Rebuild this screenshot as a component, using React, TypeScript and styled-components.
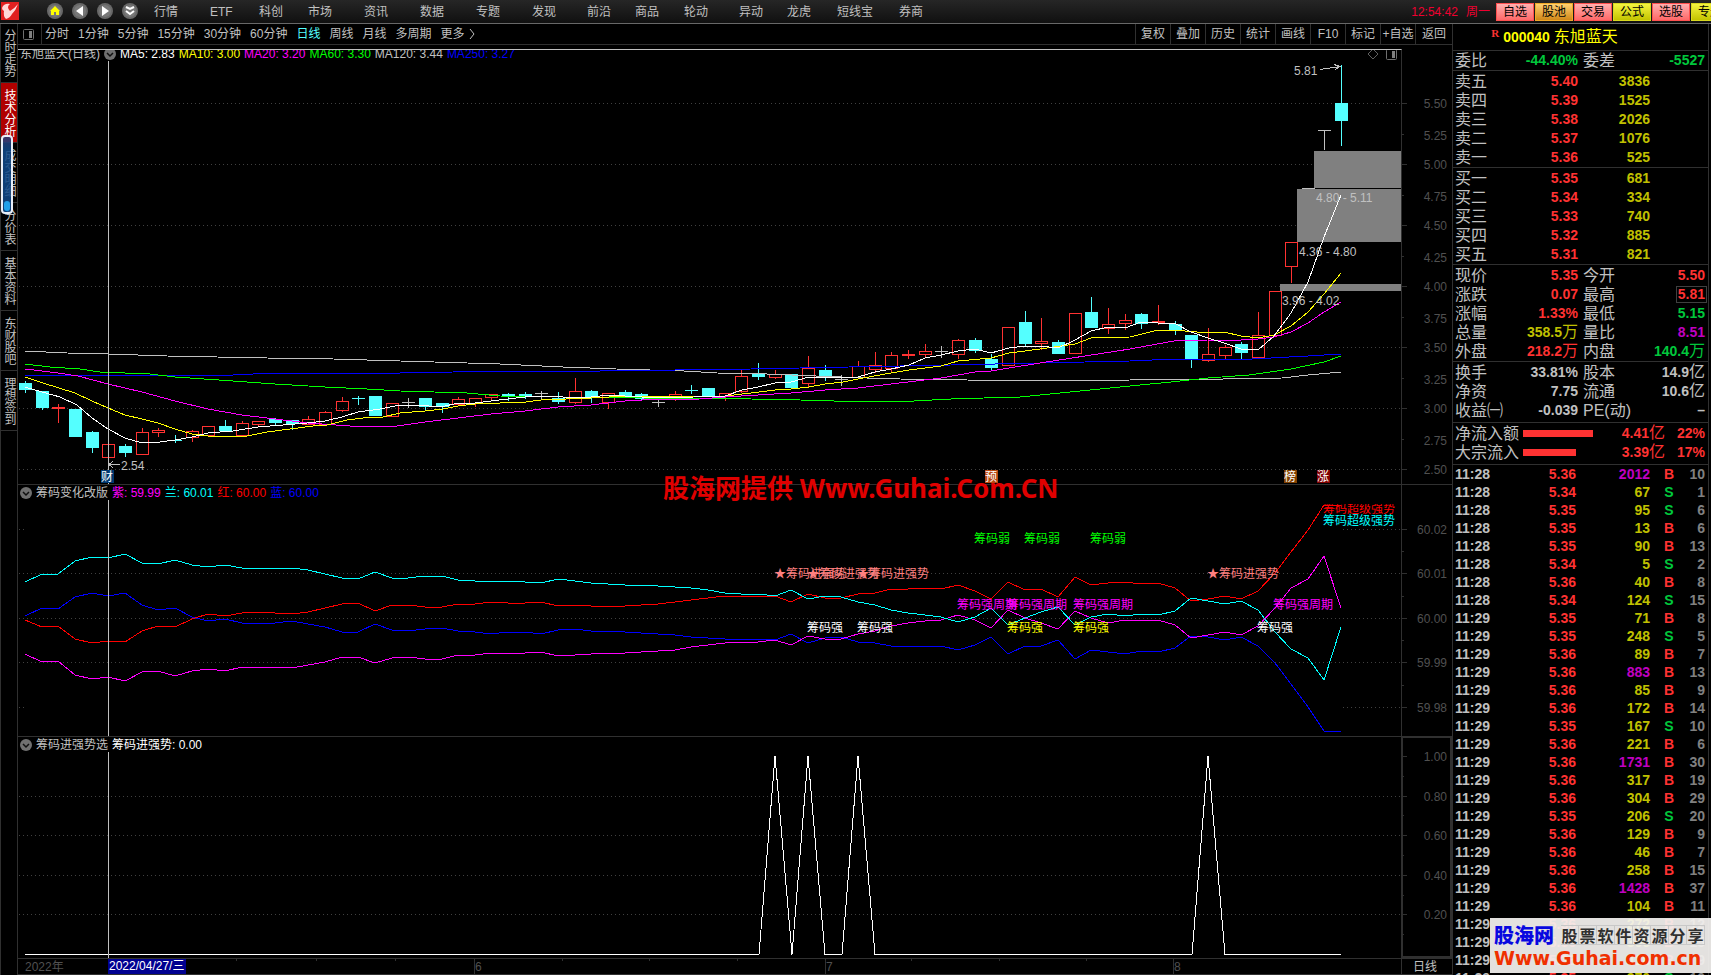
import React from 'react';
import styled, { createGlobalStyle } from 'styled-components';

const FONT = '"Liberation Sans", "Noto Sans CJK SC", sans-serif';

const C = {
  line: '#303030',
  dim: '#484848',
  text: '#c0c0c0',
  red: '#ff3232',
  green: '#00c83c',
  yellow: '#c0c000',
  purple: '#c000c0',
  cyan: '#54ffff',
  magenta: '#ff00ff',
  gray: '#808080',
};

const Global = createGlobalStyle`
  * { box-sizing: border-box; }
  body { margin: 0; background: #000; color: ${C.text}; font: 12px/16px ${FONT}; overflow: hidden; }
  button { font: inherit; color: inherit; background: none; border: 0; padding: 0; margin: 0; white-space: nowrap; }
  table { border-collapse: collapse; table-layout: fixed; width: 100%; }
  th, td { padding: 0; font-weight: inherit; text-align: right; white-space: nowrap; }
  th { text-align: left; }
`;

/* ---------- frame ---------- */

const Page = styled.div`
  display: flex;
  flex-direction: column;
  height: 100vh;
  overflow: hidden;
`;

const TopBar = styled.header`
  display: flex;
  align-items: center;
  height: 24px;
  flex: none;
  background: linear-gradient(#262626, #101010);
  border-bottom: 1px solid #686868;
  overflow: hidden;
`;

const LogoBox = styled.span`
  display: flex;
  width: 47px;
  height: 20px;
  padding-left: 1px;
`;

const IconRow = styled.div`
  display: flex;
  gap: 9px;
  padding-right: 16px;
`;

const IconButton = styled.button`
  display: flex;
  width: 16px;
  height: 20px;
`;

const Menu = styled.nav`
  display: flex;
  flex: 1;
`;

const MenuItem = styled.button<{ $w: number }>`
  width: ${p => p.$w}px;
  text-align: left;
`;

const Clock = styled.time`
  color: #f00030;
  padding-right: 6px;
  display: flex;
  gap: 8px;
`;

const QuickBar = styled.div`
  display: flex;
  gap: 1px;
  width: 215px;
  overflow: hidden;
`;

const quickFill = {
  red: 'linear-gradient(#ffb0b0, #ff6868)',
  orange: 'linear-gradient(#ffd070, #d08818)',
  yellow: 'linear-gradient(#f4f440, #c4c400)',
};

const QuickButton = styled.button<{ $tone: keyof typeof quickFill }>`
  flex: none;
  width: 38px;
  height: 18px;
  line-height: 16px;
  border: 1px solid ${p => (p.$tone === 'red' ? '#ff5050' : p.$tone === 'orange' ? '#f0a828' : '#d8d820')};
  background: ${p => quickFill[p.$tone]};
  color: #000;
`;

const Body = styled.div`
  display: grid;
  grid-template-columns: 18px minmax(0, 1fr) 259px;
  flex: 1;
  min-height: 0;
`;

/* ---------- left tabs ---------- */

const Side = styled.nav`
  position: relative;
  display: flex;
  flex-direction: column;
  border-left: 1px solid ${C.line};
  border-right: 1px solid ${C.line};
`;

const SideTab = styled.button<{ $h: number; $on?: boolean }>`
  height: ${p => p.$h}px;
  flex: none;
  display: flex;
  align-items: center;
  justify-content: center;
  border-bottom: 1px solid ${C.line};
  background: ${p => (p.$on ? '#b00000' : 'none')};
  color: ${p => (p.$on ? '#fff' : C.text)};
  span { writing-mode: vertical-rl; line-height: 16px; }
`;

const Thumb = styled.div`
  position: absolute;
  left: 0;
  top: 111px;
  width: 12px;
  height: 79px;
  border: 2px solid #e8eef8;
  border-radius: 4px;
  background: linear-gradient(rgba(48, 56, 112, 0.9), rgba(16, 72, 136, 0.86) 12px);
  &::after {
    content: '';
    position: absolute;
    left: 1px;
    right: 1px;
    bottom: 1px;
    height: 10px;
    border-radius: 3px;
    background: #20a0e8;
  }
`;

/* ---------- charts ---------- */

const Center = styled.main`
  display: flex;
  flex-direction: column;
  min-width: 0;
`;

const Toolbar = styled.div`
  display: flex;
  align-items: stretch;
  height: 21px;
  flex: none;
  line-height: 15px;
  border-bottom: 1px solid ${C.line};
`;

const PanelToggle = styled.button`
  width: 24px;
  display: flex;
  align-items: center;
  padding-left: 4px;
  border-right: 1px solid ${C.line};
`;

const Periods = styled.div`
  display: flex;
  flex: 1;
  gap: 9px;
  padding-left: 3px;
`;

const Period = styled.button<{ $on?: boolean }>`
  color: ${p => (p.$on ? C.cyan : C.text)};
  display: flex;
  align-items: center;
  gap: 4px;
`;

const Tool = styled.button`
  width: 35px;
  border-left: 1px solid ${C.line};
  &:last-child { width: 37px; }
`;

const Pane = styled.section<{ $grow: number }>`
  display: flex;
  flex-direction: column;
  flex: ${p => p.$grow} 1 0;
  min-height: 0;
`;

const Head = styled.div<{ $main?: boolean }>`
  display: flex;
  flex: none;
  height: 16px;
  ${p => (p.$main ? 'padding-top: 4px;' : `border-top: 1px solid ${C.line};`)}
`;

const Legend = styled.div<{ $main?: boolean }>`
  display: flex;
  align-items: center;
  flex: 1;
  gap: 4px;
  padding-left: 2px;
  line-height: 15px;
  padding-top: 1px;
  overflow: hidden;
  border-right: 1px solid ${C.line};
  ${p => p.$main && `border-top: 1px solid ${C.text}; align-items: flex-end; line-height: 14px; padding-top: 0;`}
`;

const LegendItem = styled.span<{ $c: string }>`
  color: ${p => p.$c};
`;

const LegendTitle = styled.span`
  display: flex;
  align-items: center;
  gap: 4px;
`;

const Corner = styled.span`
  margin-left: auto;
  display: flex;
  padding-right: 3px;
`;

const AxisHead = styled.div<{ $box?: boolean }>`
  width: 50px;
  ${p => p.$box && `border: 2px solid ${C.line}; border-bottom: 0; border-left-width: 1px; border-top-width: 1px;`}
`;

const Plot = styled.svg`
  display: block;
  flex: 1;
  width: 100%;
  min-height: 0;
  font: 12px ${FONT};
`;

const Timeline = styled.svg`
  display: block;
  flex: none;
  width: 100%;
  height: 17px;
  font: 12px ${FONT};
`;

/* ---------- quote panel ---------- */

const Quote = styled.aside`
  position: relative;
  border-left: 1px solid ${C.line};
  padding-right: 2px;
  font: bold 14px/19px ${FONT};
  overflow: hidden;
`;

const QuoteInner = styled.div`
  border-right: 1px solid ${C.line};
  height: 100%;
`;

const Block = styled.div<{ $h: number }>`
  border-bottom: 1px solid ${C.line};
  padding: ${p => (p.$h > 20 ? 1 : 0)}px 3px 0 2px;
  height: ${p => p.$h}px;
  tr { height: 19px; }
`;

const StockTitle = styled.h1`
  display: flex;
  justify-content: center;
  margin: 0;
  height: 27px;
  padding: 3px 52px 0 0;
  font: bold 14px/20px ${FONT};
  color: #ffff00;
  border-bottom: 1px solid ${C.line};
  gap: 4px;
  sup { color: ${C.red}; font: bold 11px/11px "Liberation Serif", serif; padding-top: 1px; }
`;

const Cjk = styled.span`
  font-size: 16px;
  line-height: 16px;
  font-weight: normal;
`;

const Label = styled.th`
  font-size: 16px;
  font-weight: normal;
  color: ${C.text};
`;

const Label2 = styled(Label)`
  padding-left: 5px;
`;

const Val = styled.td<{ $c?: string }>`
  color: ${p => p.$c || C.text};
`;

const Boxed = styled.span`
  display: inline-block;
  border: 1px solid #404040;
  line-height: 15px;
  padding: 0 1px;
  margin-right: -2px;
`;

const FlowBar = styled.div`
  height: 7px;
  margin-left: 5px;
  background: ${C.red};
`;

const Tape = styled.table`
  width: 250px;
  margin-left: 2px;
  line-height: 18px;
  tr { height: 18px; }
`;

const Direction = styled.td<{ $buy: boolean }>`
  text-align: center;
  color: ${p => (p.$buy ? C.red : C.green)};
`;

const Stamp = styled.div`
  position: absolute;
  right: 0;
  bottom: 2px;
  width: 221px;
  height: 55px;
  padding: 5px 4px 0;
  background: rgba(244, 242, 240, 0.93);
`;

const StampTop = styled.div`
  display: flex;
  align-items: center;
  gap: 7px;
  height: 24px;
  color: #0808e0;
  font: 900 20px/24px "Noto Sans CJK SC", sans-serif;
`;

const StampSlogan = styled.span`
  display: grid;
  grid-template-columns: repeat(8, 18px);
  font-size: 16px;
  font-weight: bold;
  line-height: 18px;
  color: #303030;
  text-align: center;
  span { border: 1px solid #c8c8c8; border-left-width: 0; }
`;

const StampUrl = styled.div`
  font: bold 19px/22px "DejaVu Sans", sans-serif;
  color: #f03000;
  white-space: nowrap;
`;

/* ---------- data ---------- */

const menu: [string, number][] = [
  ['行情', 56], ['ETF', 49], ['科创', 49], ['市场', 56], ['资讯', 56], ['数据', 56], ['专题', 56], ['发现', 55],
  ['前沿', 48], ['商品', 49], ['轮动', 55], ['异动', 48], ['龙虎', 50], ['短线宝', 62], ['券商', 40],
];
const quick: [string, keyof typeof quickFill][] = [
  ['自选', 'red'], ['股池', 'orange'], ['交易', 'red'], ['公式', 'yellow'], ['选股', 'red'], ['专题', 'yellow'],
];
const side: [string, number][] = [
  ['分时走势', 59], ['技术分析', 60], ['成交明细', 60], ['分价表', 48], ['基本资料', 60], ['东财股吧', 60], ['理想签到', 60],
];
const periods = ['分时', '1分钟', '5分钟', '15分钟', '30分钟', '60分钟', '日线', '周线', '月线', '多周期', '更多'];
const tools = ['复权', '叠加', '历史', '统计', '画线', 'F10', '标记', '+自选', '返回'];

const barX = (i: number) => Math.round(25 + 16.66 * i);

// kind (r: hollow up, f: flat up, c: down, d: grey doji, e: cyan doji), body top, body bottom, high, low
type Candle = [string, number, number, number, number];
const candles: Candle[] = [
  ['c', 383, 390, 381, 393], ['c', 391, 408, 391, 410], ['f', 407, 409, 404, 423], ['c', 409, 437, 409, 437],
  ['c', 432, 448, 431, 453], ['r', 444, 457, 444, 463], ['c', 446, 453, 444, 457], ['r', 432, 454, 428, 454],
  ['r', 430, 432, 428, 437], ['e', 440, 440, 435, 443], ['r', 431, 437, 430, 442], ['r', 426, 435, 426, 437],
  ['c', 426, 431, 420, 431], ['r', 423, 435, 421, 435], ['r', 421, 424, 421, 426], ['c', 419, 423, 418, 425],
  ['c', 420, 424, 420, 430], ['r', 419, 424, 416, 424], ['r', 412, 424, 411, 424], ['r', 401, 410, 397, 412],
  ['e', 398, 398, 396, 405], ['c', 396, 416, 396, 416], ['r', 403, 416, 403, 416], ['d', 402, 402, 398, 408],
  ['c', 398, 407, 398, 410], ['c', 403, 407, 403, 413], ['r', 399, 404, 397, 406], ['r', 398, 403, 398, 407],
  ['r', 394, 397, 394, 401], ['c', 394, 397, 393, 401], ['c', 394, 396, 392, 399], ['d', 393, 393, 391, 400],
  ['c', 398, 402, 392, 404], ['r', 391, 402, 378, 404], ['c', 391, 397, 390, 403], ['r', 393, 402, 393, 409],
  ['c', 392, 396, 390, 396], ['c', 394, 399, 393, 400], ['d', 402, 402, 398, 407], ['r', 394, 397, 391, 401],
  ['e', 390, 390, 385, 394], ['c', 388, 396, 388, 396], ['r', 393, 396, 393, 401], ['r', 376, 391, 370, 393],
  ['c', 374, 377, 363, 380], ['r', 374, 377, 370, 379], ['c', 374, 388, 374, 388], ['r', 368, 383, 356, 388],
  ['c', 370, 376, 365, 381], ['d', 379, 379, 375, 386], ['r', 366, 377, 361, 379], ['r', 365, 369, 352, 373],
  ['r', 355, 368, 352, 373], ['f', 354, 356, 350, 359], ['r', 351, 354, 344, 358], ['d', 351, 351, 346, 358],
  ['r', 340, 354, 339, 359], ['c', 340, 351, 338, 353], ['c', 359, 368, 354, 370], ['r', 327, 365, 327, 365],
  ['c', 322, 344, 311, 346], ['r', 341, 343, 318, 350], ['c', 342, 354, 340, 354], ['r', 313, 353, 313, 353],
  ['c', 312, 328, 297, 328], ['r', 324, 328, 308, 334], ['r', 320, 323, 314, 330], ['c', 314, 324, 313, 329],
  ['f', 321, 323, 305, 325], ['c', 324, 330, 321, 335], ['c', 335, 359, 335, 368], ['r', 354, 360, 328, 362],
  ['r', 347, 355, 345, 359], ['c', 344, 353, 342, 359], ['r', 335, 357, 312, 357], ['r', 291, 335, 291, 335],
  ['r', 242, 266, 242, 283], ['d', 188, 188, 188, 188], ['d', 130, 130, 130, 150], ['c', 103, 121, 65, 146],
];

const averages: [string, string][] = [
  [C.text, '25,351 67,353 108,354 167,356 217,357 267,358 333,359 400,361 434,362 500,364 563,367 616,369 650,370 684,371 717,373 767,374 816,376 867,378 900,379 967,380 1040,381 1130,380 1152,379 1223,379 1282,378 1308,375 1341,372'],
  ['#0000ff', '25,375 233,375 253,374 400,373 453,372 600,371 751,369 849,367 951,365 1040,363 1130,361 1174,359 1252,359 1308,356 1341,354'],
  ['#00ff00', '25,364 50,367 80,369 100,372 150,374 175,377 233,381 275,384 325,387 367,389 400,391 434,392 467,393 500,396 563,397 642,398 751,399 800,400 834,401 914,401 951,399 984,398 1020,397 1040,395 1130,386 1171,382 1208,378 1249,375 1291,369 1324,362 1341,356'],
  [C.magenta, '25,369 42,371 58,373 78,376 108,384 142,392 175,401 208,409 242,415 275,419 308,423 350,426 397,426 425,422 458,418 491,414 525,411 558,407 591,405 625,401 642,400 700,399 725,397 758,395 791,393 825,390 858,388 891,384 941,378 975,372 991,371 1009,368 1040,363 1130,349 1174,341 1208,340 1241,340 1258,339 1274,337 1291,332 1308,323 1324,312 1341,302'],
  ['#ffff00', '25,377 43,383 75,393 92,401 108,408 125,415 142,419 158,423 175,429 192,434 208,436 228,437 247,436 267,432 290,429 313,426 327,425 347,420 363,418 383,417 400,413 425,411 443,409 458,406 475,404 500,403 526,402 541,400 566,399 591,398 609,397 641,396 661,397 702,396 725,396 751,393 775,390 791,389 809,387 825,384 843,382 858,379 891,373 909,370 941,366 958,361 991,358 1009,353 1025,351 1040,349 1075,344 1091,338 1130,337 1158,330 1174,330 1208,333 1224,332 1241,336 1258,338 1274,335 1291,326 1308,312 1324,294 1341,273'],
  ['#ffffff', '25,387 42,392 60,397 77,405 92,418 108,429 125,438 142,443 160,442 175,440 192,437 208,433 233,431 258,427 283,425 307,423 325,421 342,417 358,412 380,409 400,405 417,405 441,407 458,403 475,403 491,401 508,399 525,397 541,396 563,397 591,397 609,395 625,396 642,397 658,398 694,397 725,396 742,390 758,387 775,383 791,382 809,377 858,377 875,372 891,369 909,365 925,358 941,355 958,351 975,349 991,353 1009,348 1025,346 1040,346 1058,348 1075,340 1091,331 1108,327 1125,328 1141,322 1158,323 1174,323 1191,332 1208,338 1224,343 1241,349 1258,350 1274,336 1291,313 1308,282 1324,237 1341,195'],
];

const chips: [string, number[]][] = [
  ['#0000ff', [616, 608, 609, 597, 593, 596, 593, 605, 610, 608, 617, 621, 619, 623, 623, 623, 621, 624, 627, 632, 632, 624, 630, 631, 629, 628, 631, 632, 634, 632, 632, 634, 630, 629, 631, 631, 632, 633, 634, 635, 637, 638, 639, 639, 639, 640, 634, 643, 638, 637, 642, 643, 646, 646, 647, 646, 650, 645, 637, 654, 646, 646, 640, 659, 650, 652, 654, 651, 652, 648, 636, 637, 640, 637, 646, 663, 684, 707, 731, 731]],
  [C.magenta, [654, 662, 661, 675, 679, 677, 681, 672, 671, 676, 671, 669, 671, 667, 667, 667, 668, 665, 662, 657, 657, 663, 658, 657, 659, 659, 655, 655, 653, 654, 653, 652, 656, 655, 654, 653, 653, 652, 651, 650, 647, 645, 643, 642, 642, 640, 645, 636, 639, 639, 634, 631, 626, 623, 621, 620, 615, 620, 628, 610, 618, 623, 629, 611, 618, 623, 620, 621, 620, 625, 638, 635, 632, 635, 626, 608, 588, 579, 556, 608]],
  ['#ff0000', [620, 627, 626, 639, 643, 641, 642, 631, 626, 627, 619, 614, 616, 613, 612, 613, 614, 612, 608, 604, 603, 611, 605, 605, 607, 607, 604, 604, 602, 603, 603, 602, 606, 605, 606, 607, 606, 605, 604, 602, 600, 598, 596, 596, 597, 596, 602, 594, 598, 598, 594, 593, 589, 589, 588, 589, 585, 591, 599, 582, 590, 589, 597, 577, 585, 583, 582, 584, 583, 588, 601, 599, 596, 599, 591, 573, 552, 530, 505, 505]],
  ['#00ffff', [582, 574, 574, 561, 557, 558, 554, 563, 564, 560, 565, 567, 565, 568, 569, 568, 568, 570, 574, 578, 579, 572, 578, 578, 576, 576, 580, 581, 582, 581, 582, 583, 579, 581, 583, 584, 585, 585, 586, 587, 588, 590, 593, 594, 594, 596, 590, 599, 596, 597, 602, 605, 610, 613, 615, 617, 622, 617, 608, 625, 618, 612, 607, 625, 617, 614, 616, 614, 615, 611, 598, 601, 604, 601, 610, 632, 649, 658, 680, 627]],
];

const notes: [number, number, string, string][] = [
  [974, 543, '筹码弱', '#00ff00'], [1024, 543, '筹码弱', '#00ff00'], [1090, 543, '筹码弱', '#00ff00'],
  [774, 578, '★筹码进强势', '#ff8080'], [807, 578, '★筹码进强势', '#ff8080'], [857, 578, '★筹码进强势', '#ff8080'], [1207, 578, '★筹码进强势', '#ff8080'],
  [957, 609, '筹码强周期', C.magenta], [1007, 609, '筹码强周期', C.magenta], [1073, 609, '筹码强周期', C.magenta], [1273, 609, '筹码强周期', C.magenta],
  [807, 632, '筹码强', '#fff'], [857, 632, '筹码强', '#fff'], [1257, 632, '筹码强', '#fff'],
  [1007, 632, '筹码强', '#ffff00'], [1073, 632, '筹码强', '#ffff00'],
  [1323, 513, '筹码超级强势', '#ff0000'], [1323, 525, '筹码超级强势', '#00ffff'],
];

const badges: [number, string, string][] = [
  [101, '财', '#003870'], [985, '预', '#b84810'], [1284, '榜', '#804000'], [1317, '涨', '#800000'],
];

const sells: [string, string, string][] = [
  ['卖五', '5.40', '3836'], ['卖四', '5.39', '1525'], ['卖三', '5.38', '2026'], ['卖二', '5.37', '1076'], ['卖一', '5.36', '525'],
];
const buys: [string, string, string][] = [
  ['买一', '5.35', '681'], ['买二', '5.34', '334'], ['买三', '5.33', '740'], ['买四', '5.32', '885'], ['买五', '5.31', '821'],
];

type Pair = [string, string, string, string, string, string];
const stats: Pair[] = [
  ['现价', '5.35', C.red, '今开', '5.50', C.red],
  ['涨跌', '0.07', C.red, '最高', '5.81', C.red],
  ['涨幅', '1.33%', C.red, '最低', '5.15', C.green],
  ['总量', '358.5万', C.yellow, '量比', '8.51', C.purple],
  ['外盘', '218.2万', C.red, '内盘', '140.4万', C.green],
];
const basics: Pair[] = [
  ['换手', '33.81%', C.text, '股本', '14.9亿', C.text],
  ['净资', '7.75', C.text, '流通', '10.6亿', C.text],
  ['收益㈠', '-0.039', C.text, 'PE(动)', '–', C.text],
];

const tape: [string, string, number, string, number][] = [
  ['11:28', '5.36', 2012, 'B', 10], ['11:28', '5.34', 67, 'S', 1], ['11:28', '5.35', 95, 'S', 6], ['11:28', '5.35', 13, 'B', 6],
  ['11:28', '5.35', 90, 'B', 13], ['11:28', '5.34', 5, 'S', 2], ['11:28', '5.36', 40, 'B', 8], ['11:28', '5.34', 124, 'S', 15],
  ['11:29', '5.35', 71, 'B', 8], ['11:29', '5.35', 248, 'S', 5], ['11:29', '5.36', 89, 'B', 7], ['11:29', '5.36', 883, 'B', 13],
  ['11:29', '5.36', 85, 'B', 9], ['11:29', '5.36', 172, 'B', 14], ['11:29', '5.35', 167, 'S', 10], ['11:29', '5.36', 221, 'B', 6],
  ['11:29', '5.36', 1731, 'B', 30], ['11:29', '5.36', 317, 'B', 19], ['11:29', '5.36', 304, 'B', 29], ['11:29', '5.35', 206, 'S', 20],
  ['11:29', '5.36', 129, 'B', 9], ['11:29', '5.36', 46, 'B', 7], ['11:29', '5.36', 258, 'B', 15], ['11:29', '5.36', 1428, 'B', 37],
  ['11:29', '5.36', 104, 'B', 11], ['11:29', '5.36', 272, 'B', 12], ['11:29', '5.36', 306, 'B', 15], ['11:29', '5.36', 118, 'B', 9],
  ['11:29', '5.35', 370, 'S', 10],
];

/* ---------- drawings ---------- */

const Logo = () => (
  <svg width="18" height="18" viewBox="0 0 18 18" aria-hidden="true">
    <rect width="18" height="18" fill="#e02020" />
    <path d="M1 6 Q3 1 9 2 Q5 5 9 9 Q13 7 17 2 Q15 8 11 12 Q9 16 5 17 Q2 14 3 9 Q1 8 1 6 Z" fill="#ffd8d8" />
  </svg>
);

const Round = ({ kind }: { kind: string }) => (
  <svg width="16" height="18" viewBox="0 0 16 18" aria-hidden="true">
    <circle cx="8" cy="9" r="8" fill="#686868" />
    <circle cx="8" cy="9" r="6" fill="#909090" opacity="0.4" />
    {kind === '主页' && <path d="M8 4 L13 9 H12 V13 H9 V10 H7 V13 H4 V9 H3 Z" fill="#ffff00" />}
    {kind === '后退' && <path d="M11 4 V14 L4 9 Z" fill="#fff" />}
    {kind === '前进' && <path d="M5 4 V14 L12 9 Z" fill="#fff" />}
    {kind === '展开' && <path d="M4 5 L8 7 L12 5 M4 9 L8 12 L12 9" fill="none" stroke="#fff" strokeWidth="2" />}
  </svg>
);

const Fold = () => (
  <svg width="12" height="12" viewBox="0 0 12 12" aria-hidden="true">
    <circle cx="6" cy="6" r="6" fill="#707070" />
    <path d="M3 5 L6 8 L9 5" fill="none" stroke="#101010" strokeWidth="1.5" />
  </svg>
);

const PanelIcon = () => (
  <svg width="13" height="13" viewBox="0 0 13 13" aria-hidden="true">
    <rect x="1.5" y="1.5" width="10" height="10" rx="1" fill="none" stroke="#707070" />
    <rect x="7" y="3" width="3" height="7" fill="#808080" />
  </svg>
);

const Rows = ({ ys }: { ys: number[] }) => (
  <g stroke="#404040" strokeDasharray="1 3">
    {ys.map(y => <path key={y} d={`M19 ${y}.5 H1401`} />)}
  </g>
);

const Scale = ({ marks, minor }: { marks: [number, string][]; minor: number[] }) => (
  <g>
    <g stroke={C.line}>
      {marks.map(([y]) => <path key={y} d={`M1401 ${y}.5 h6`} />)}
      {minor.map(y => <path key={y} d={`M1401 ${y}.5 h3`} />)}
    </g>
    <g fill="#505050" textAnchor="end">
      {marks.map(([y, t]) => <text key={y} x="1447" y={y + 5}>{t}</text>)}
    </g>
  </g>
);

const CandleMark = ({ c, i }: { c: Candle; i: number }) => {
  const [k, top, bottom, high, low] = c;
  const x = barX(i);
  const color = k === 'c' || k === 'e' ? C.cyan : k === 'd' ? C.text : C.red;
  const flat = k === 'd' || k === 'e';
  return (
    <g stroke={color} fill={color}>
      {high < top && <path d={`M${x}.5 ${high} V${top}`} />}
      {low > bottom && <path d={`M${x}.5 ${bottom} V${low}`} />}
      {flat && <path d={`M${x - 6} ${top}.5 h13`} />}
      {k === 'r' && <rect x={x - 5.5} y={top + 0.5} width="12" height={bottom - top} fill="none" />}
      {(k === 'c' || k === 'f') && <rect x={x - 6} y={top} width="13" height={bottom - top} stroke="none" />}
    </g>
  );
};

const PricePlot = () => (
  <Plot viewBox="18 61 1434 423" shapeRendering="crispEdges" role="img" aria-label="日线">
    <Rows ys={[103, 164, 225, 286, 347, 408, 469]} />
    <path d="M1401.5 61 V484" stroke={C.line} />
    <Scale
      marks={[[103, '5.50'], [164, '5.00'], [225, '4.50'], [286, '4.00'], [347, '3.50'], [408, '3.00'], [469, '2.50']]}
      minor={[134, 195, 256, 317, 378, 439]}
    />
    <g fill="#505050" textAnchor="end">
      {['5.25', '4.75', '4.25', '3.75', '3.25', '2.75'].map((t, i) => <text key={t} x="1447" y={140 + 61 * i}>{t}</text>)}
    </g>
    <g fill="#808080">
      <rect x="1314" y="151" width="87" height="37" />
      <rect x="1297" y="189" width="104" height="53" />
      <rect x="1280" y="284" width="121" height="7" />
    </g>
    {candles.map((c, i) => <CandleMark key={i} c={c} i={i} />)}
    <g fill="none">
      {averages.map(([color, points]) => <polyline key={color} points={points} stroke={color} />)}
    </g>
    <g fill={C.text}>
      <text x="1294" y="75">5.81</text>
      <text x="121" y="470">2.54</text>
      <text x="1316" y="202">4.80 - 5.11</text>
      <text x="1299" y="256">4.36 - 4.80</text>
      <text x="1282" y="305">3.96 - 4.02</text>
    </g>
    <g stroke={C.text} fill="none">
      <path d="M1320 69.5 L1340 66.5 M1334 64.5 L1340 66.5 L1335 69.5" />
      <path d="M120 464.5 H109 M113 461.5 L109 464.5 L113 467.5" />
    </g>
    <path d="M108.5 61 V484" stroke={C.text} />
    {badges.map(([x, t, bg]) => (
      <g key={t}>
        <rect x={x} y="470" width="13" height="13" fill={bg} />
        <text x={x} y="481" fill="#fff">{t}</text>
      </g>
    ))}
  </Plot>
);

const ChipPlot = () => (
  <Plot viewBox="18 500 1434 236" shapeRendering="crispEdges" role="img" aria-label="筹码变化改版">
    <defs>
      <clipPath id="chipArea"><rect x="18" y="504" width="1434" height="232" /></clipPath>
    </defs>
    <Rows ys={[573, 618, 662]} />
    <g stroke="#404040" strokeDasharray="1 3">
      <path d="M19 529.5 H25 M1343 529.5 H1401 M19 707.5 H25 M1343 707.5 H1401" />
    </g>
    <path d="M1401.5 500 V736" stroke={C.line} />
    <Scale
      marks={[[529, '60.02'], [573, '60.01'], [618, '60.00'], [662, '59.99'], [707, '59.98']]}
      minor={[551, 596, 640, 685]}
    />
    <g fill="none">
      {chips.map(([color, ys]) => (
        <polyline key={color} stroke={color} points={ys.map((y, i) => `${barX(i)},${y}`).join(' ')} />
      ))}
    </g>
    <g clipPath="url(#chipArea)">
      {notes.map(([x, y, t, c], i) => <text key={i} x={x} y={y} fill={c}>{t}</text>)}
    </g>
    <path d="M108.5 500 V736" stroke={C.text} />
  </Plot>
);

const peaks = [775, 808, 858, 1208];

const SignalPlot = () => (
  <Plot viewBox="18 752 1434 206" shapeRendering="crispEdges" role="img" aria-label="筹码进强势选">
    <Rows ys={[796, 835, 875, 914]} />
    <path d="M1402 752 V957 H1451 V752" stroke={C.line} strokeWidth="2" fill="none" />
    <Scale
      marks={[[756, '1.00'], [796, '0.80'], [835, '0.60'], [875, '0.40'], [914, '0.20']]}
      minor={[776, 815, 855, 895, 934]}
    />
    <polyline
      fill="none"
      stroke="#fff"
      points={`25,954.5 ${peaks.map(p => `${p - 16},954.5 ${p},756 ${p + 17},954.5`).join(' ')} 1341,954.5`}
    />
    <path d="M108.5 752 V958" stroke={C.text} />
  </Plot>
);

const Dates = () => (
  <Timeline viewBox="18 958 1434 17" shapeRendering="crispEdges" role="img" aria-label="日期">
    <g stroke={C.line}>
      <path d="M18 958.5 H1452 M18 974.5 H1452 M1401.5 958 V974" />
      <path d="M474.5 958 V974 M825.5 958 V974 M1173.5 958 V974" />
      {[236, 316, 395, 562, 649, 737, 911, 999, 1086].map(x => <path key={x} d={`M${x}.5 958 v3`} />)}
    </g>
    <rect x="108" y="959" width="78" height="15" fill="#000090" />
    <g fill="#505050">
      <text x="25" y="971">2022年</text>
      <text x="475" y="971">6</text>
      <text x="826" y="971">7</text>
      <text x="1174" y="971">8</text>
    </g>
    <g fill={C.text}>
      <text x="109" y="970" fill="#fff">2022/04/27/三</text>
      <text x="1413" y="971">日线</text>
    </g>
  </Timeline>
);

const Banner = styled.div`
  position: absolute;
  left: 663px;
  top: 470px;
  font: bold 26px/36px "Noto Sans", "Noto Sans CJK SC", sans-serif;
  color: #e00000;
  white-space: nowrap;
`;

/* ---------- table parts ---------- */

const Mixed = ({ text }: { text: string }) => {
  const m = text.match(/^(.*?)([万亿])$/);
  return m ? <>{m[1]}<Cjk>{m[2]}</Cjk></> : <>{text}</>;
};

const Book = ({ rows }: { rows: [string, string, string][] }) => (
  <Block $h={97}>
    <table>
      <colgroup><col width="50" /><col width="73" /><col width="72" /><col /></colgroup>
      <tbody>
        {rows.map(([n, p, v]) => (
          <tr key={n}><Label scope="row">{n}</Label><Val $c={C.red}>{p}</Val><Val $c={C.yellow}>{v}</Val><td /></tr>
        ))}
      </tbody>
    </table>
  </Block>
);

const Pairs = ({ rows, h }: { rows: Pair[]; h: number }) => (
  <Block $h={h}>
    <table>
      <colgroup><col width="50" /><col width="73" /><col width="60" /><col width="67" /></colgroup>
      <tbody>
        {rows.map(([a, b, c, d, e, f]) => (
          <tr key={a}>
            <Label scope="row">{a}</Label>
            <Val $c={c}><Mixed text={b} /></Val>
            <Label2 scope="row">{d}</Label2>
            <Val $c={f}>{d === '最高' ? <Boxed>{e}</Boxed> : <Mixed text={e} />}</Val>
          </tr>
        ))}
      </tbody>
    </table>
  </Block>
);

export default function App() {
  return (
    <Page>
      <Global />
      <TopBar>
        <LogoBox><Logo /></LogoBox>
        <IconRow>
          {['主页', '后退', '前进', '展开'].map(k => <IconButton key={k} aria-label={k}><Round kind={k} /></IconButton>)}
        </IconRow>
        <Menu>{menu.map(([t, w]) => <MenuItem key={t} $w={w}>{t}</MenuItem>)}</Menu>
        <Clock><span>12:54:42</span><span>周一</span></Clock>
        <QuickBar>{quick.map(([t, tone]) => <QuickButton key={t} $tone={tone}>{t}</QuickButton>)}</QuickBar>
      </TopBar>
      <Body>
        <Side>
          {side.map(([t, h]) => <SideTab key={t} $h={h} $on={t === '技术分析'}><span>{t}</span></SideTab>)}
          <Thumb />
        </Side>
        <Center>
          <Toolbar>
            <PanelToggle aria-label="侧栏"><PanelIcon /></PanelToggle>
            <Periods>
              {periods.map(t => (
                <Period key={t} $on={t === '日线'}>
                  {t}
                  {t === '更多' && (
                    <svg width="6" height="10" viewBox="0 0 6 10" aria-hidden="true"><path d="M1 0 L5 5 L1 10" fill="none" stroke={C.text} /></svg>
                  )}
                </Period>
              ))}
            </Periods>
            {tools.map(t => <Tool key={t}>{t}</Tool>)}
          </Toolbar>
          <Pane $grow={439}>
            <Head $main>
              <Legend $main>
                <LegendTitle>东旭蓝天(日线) <Fold /></LegendTitle>
                <LegendItem $c="#fff">MA5: 2.83</LegendItem>
                <LegendItem $c="#ffff00">MA10: 3.00</LegendItem>
                <LegendItem $c={C.magenta}>MA20: 3.20</LegendItem>
                <LegendItem $c="#00ff00">MA60: 3.30</LegendItem>
                <LegendItem $c={C.text}>MA120: 3.44</LegendItem>
                <LegendItem $c="#0000ff">MA250: 3.27</LegendItem>
                <Corner>
                  <svg width="18" height="12" viewBox="0 0 18 12" aria-hidden="true"><path d="M6 1 L11 6 L6 11 L1 6 Z" fill="none" stroke="#606060" /></svg>
                  <PanelIcon />
                </Corner>
              </Legend>
              <AxisHead />
            </Head>
            <PricePlot />
          </Pane>
          <Pane $grow={252}>
            <Head>
              <Legend>
                <LegendTitle><Fold />筹码变化改版</LegendTitle>
                <LegendItem $c={C.magenta}>紫: 59.99</LegendItem>
                <LegendItem $c="#00ffff">兰: 60.01</LegendItem>
                <LegendItem $c="#ff0000">红: 60.00</LegendItem>
                <LegendItem $c="#0000ff">蓝: 60.00</LegendItem>
              </Legend>
              <AxisHead />
            </Head>
            <ChipPlot />
          </Pane>
          <Pane $grow={222}>
            <Head>
              <Legend>
                <LegendTitle><Fold />筹码进强势选</LegendTitle>
                <LegendItem $c="#fff">筹码进强势: 0.00</LegendItem>
              </Legend>
              <AxisHead $box />
            </Head>
            <SignalPlot />
          </Pane>
          <Dates />
        </Center>
        <Quote>
          <QuoteInner>
            <StockTitle><sup>R</sup><span>000040 <Cjk>东旭蓝天</Cjk></span></StockTitle>
            <Pairs h={20} rows={[['委比', '-44.40%', C.green, '委差', '-5527', C.green]]} />
            <Book rows={sells} />
            <Book rows={buys} />
            <Pairs h={97} rows={stats} />
            <Pairs h={61} rows={basics} />
            <Block $h={42}>
              <table>
                <colgroup><col width="63" /><col width="75" /><col /><col width="40" /></colgroup>
                <tbody>
                  <tr><Label scope="row">净流入额</Label><td><FlowBar style={{ width: 70 }} /></td><Val $c={C.red}><Mixed text="4.41亿" /></Val><Val $c={C.red}>22%</Val></tr>
                  <tr><Label scope="row">大宗流入</Label><td><FlowBar style={{ width: 53 }} /></td><Val $c={C.red}><Mixed text="3.39亿" /></Val><Val $c={C.red}>17%</Val></tr>
                </tbody>
              </table>
            </Block>
            <Tape>
              <colgroup><col width="50" /><col width="71" /><col width="74" /><col width="38" /><col width="17" /></colgroup>
              <tbody>
                {tape.map(([t, p, v, s, n], i) => (
                  <tr key={i}>
                    <th scope="row">{t}</th>
                    <Val $c={C.red}>{p}</Val>
                    <Val $c={v > 500 ? C.purple : C.yellow}>{v}</Val>
                    <Direction $buy={s === 'B'}>{s}</Direction>
                    <Val $c={C.gray}>{n}</Val>
                  </tr>
                ))}
              </tbody>
            </Tape>
          </QuoteInner>
          <Stamp>
            <StampTop>股海网<StampSlogan>{[...'股票软件资源分享'].map(c => <span key={c}>{c}</span>)}</StampSlogan></StampTop>
            <StampUrl>Www.Guhai.com.cn</StampUrl>
          </Stamp>
        </Quote>
      </Body>
      <Banner>股海网提供 Www.Guhai.Com.CN</Banner>
    </Page>
  );
}
